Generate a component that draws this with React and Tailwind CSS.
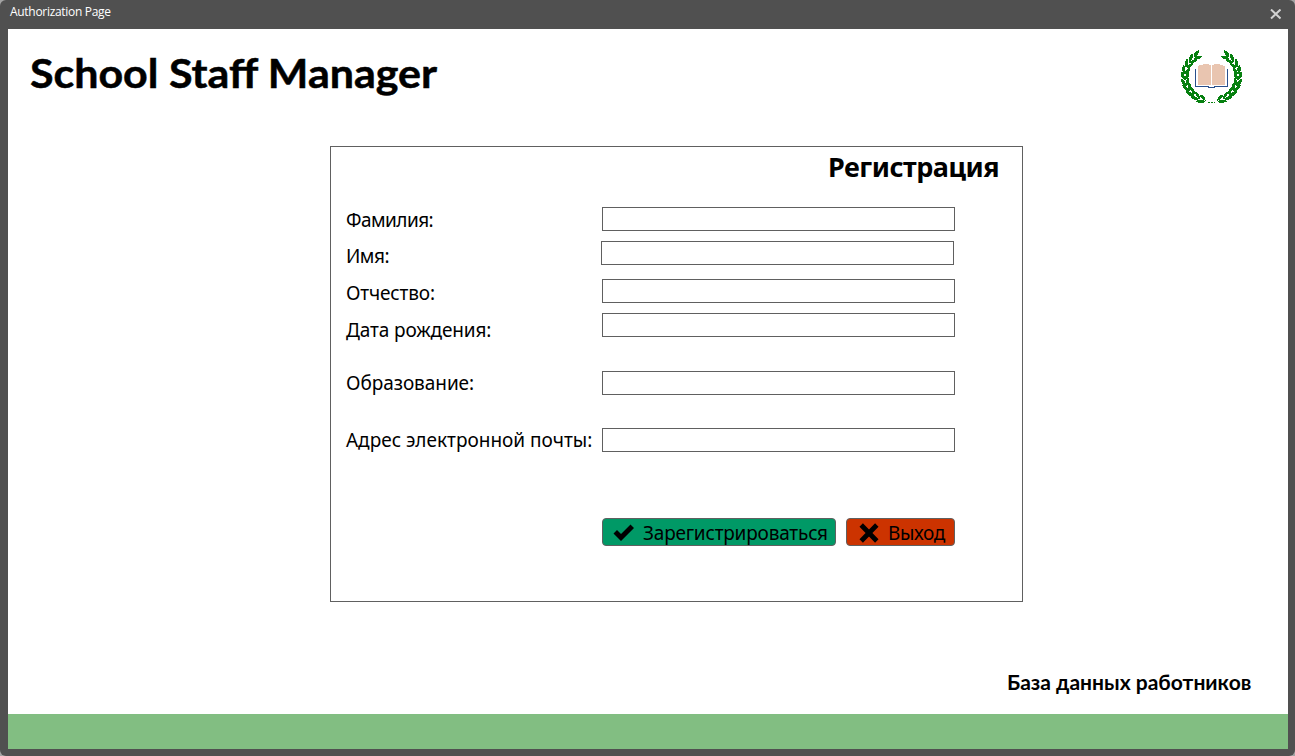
import React from "react";

const FIELDS = [
  { label: "Фамилия:", labelClass: "mt-[61px] tracking-[-0.55px]", inputClass: "mt-[60px]" },
  { label: "Имя:", labelClass: "mt-[12px] tracking-[-0.5px]", inputClass: "mt-[10px] -ml-px" },
  { label: "Отчество:", labelClass: "mt-[13px] tracking-[-0.15px]", inputClass: "mt-[14px]" },
  { label: "Дата рождения:", labelClass: "mt-[13px] tracking-[-0.12px]", inputClass: "mt-[10px]" },
  { label: "Образование:", labelClass: "mt-[29px] tracking-[-0.06px]", inputClass: "mt-[34px]" },
  { label: "Адрес электронной почты:", labelClass: "mt-[33px]", inputClass: "mt-[33px]" },
];

// Branch points of the left half of the wreath, from the tip down to the stem.
const STEPS = [0, 1, 2, 3, 4, 5, 6, 7, 8, 9];

function Branch() {
  return STEPS.map((i) => {
    const deg = 236 - i * 14;
    const a = (deg * Math.PI) / 180;
    const x = 31.5 + 26.5 * Math.cos(a);
    const y = 27.5 + 24.5 * Math.sin(a);
    const dir = deg + 98;
    return (
      <g key={i} transform={`translate(${x} ${y}) rotate(${dir})`}>
        <path d="M-3.500 .2Q-2 -5 4.500 -4.600Q4 -.2 -3.500 .2Z" />
        <path d="M-3.500 .4Q1 -1 5 3Q-1 5.200 -3.500 .4Z" />
      </g>
    );
  });
}

function Logo() {
  return (
    <svg width="64" height="56" viewBox="0 0 64 56" shapeRendering="crispEdges">
      <g fill="#078010">
        <Branch />
        <g transform="matrix(-1 0 0 1 63 0)">
          <Branch />
        </g>
        <path d="M28 53h2v1h-2zM31 53h2v1h-2zM34 53h1v1h-1z" />
      </g>
      <path d="M18 17Q24 14 31 16V36H18ZM32 16Q38 14 45 17V36H32Z" fill="#e9c5b0" />
      <path d="M15.500 20V37.500H27Q31.500 39.500 36 37.500H47.500V20" fill="none" stroke="#294f8c" strokeWidth="1" />
    </svg>
  );
}

export default function App() {
  return (
    <div className="flex h-[756px] w-[1295px] bg-[#a3a3a3] font-['Noto_Sans','Open_Sans',sans-serif] text-black">
      <div className="flex flex-1 flex-col rounded-[6px] bg-[#505050] px-2 pb-[7px] pr-[7px]">
        <header className="flex h-[29px] shrink-0 items-start justify-between">
          <span className="ml-[2px] mt-[4px] whitespace-nowrap font-['Open_Sans',sans-serif] text-[12px] leading-4 tracking-[-0.3px] text-white">
            Authorization Page
          </span>
          <svg className="mr-[7px] mt-[9px]" width="11" height="11" viewBox="0 0 11 11">
            <path d="M1 .5L10.500 9.500M10.500 .5L1 9.500" stroke="#d2d2d2" strokeWidth="2" />
          </svg>
        </header>

        <main className="flex flex-1 flex-col bg-white">
          <div className="flex h-[117px] shrink-0 items-start justify-between">
            <h1 className="ml-[22px] mt-[20px] origin-left scale-x-[1.074] whitespace-nowrap font-['Lato',sans-serif] text-[40px] font-bold leading-[48px] [-webkit-text-stroke:0.5px_black]">
              School Staff Manager
            </h1>
            <div className="mr-[44px] mt-[20px]">
              <Logo />
            </div>
          </div>

          <section className="ml-[322px] flex h-[456px] w-[693px] shrink-0 border border-[#606060] text-[19px]">
            <div className="ml-[15px] flex w-[256px] shrink-0 flex-col">
              {FIELDS.map((f) => (
                <label key={f.label} className={`h-6 whitespace-nowrap leading-6 ${f.labelClass}`}>
                  <span>{f.label}</span>
                </label>
              ))}
            </div>
            <div className="flex flex-1 flex-col">
              <div className="flex h-0 justify-end">
                <h2 className="mr-[23px] mt-[2px] whitespace-nowrap text-[27px] font-bold leading-[36px] tracking-[-0.5px]">
                  Регистрация
                </h2>
              </div>
              {FIELDS.map((f) => (
                <input
                  key={f.label}
                  aria-label={f.label}
                  className={`h-6 w-[353px] shrink-0 border border-[#606060] bg-white px-1 outline-none ${f.inputClass}`}
                />
              ))}
              <div className="mt-[66px] flex gap-[10px]">
                <button className="flex h-7 w-[234px] items-center rounded-[4px] border border-[#606060] bg-[#009966] pl-[10px]">
                  <svg className="mr-[8px] shrink-0" width="22" height="20" viewBox="0 0 22 20">
                    <path d="M.5 11.500L4 8L8 12L17.500 2.500L21 6L8 19Z" fill="black" />
                  </svg>
                  <span className="whitespace-nowrap pt-[2px] leading-6 tracking-[-0.2px]">Зарегистрироваться</span>
                </button>
                <button className="flex h-7 w-[109px] items-center rounded-[4px] border border-[#606060] bg-[#cc3300] pl-[12px]">
                  <svg className="mr-[9px] mt-px shrink-0" width="20" height="20" viewBox="0 0 20 20">
                    <path d="M2.200 2L17.800 18M17.800 2L2.200 18" stroke="black" strokeWidth="4.800" />
                  </svg>
                  <span className="whitespace-nowrap pt-[2px] leading-6 tracking-[-0.35px]">Выход</span>
                </button>
              </div>
            </div>
          </section>

          <div className="flex flex-1 items-start justify-end">
            <p className="mr-[37px] mt-[66px] origin-right scale-x-[1.052] whitespace-nowrap font-['Lato',sans-serif] text-[20px] font-bold leading-7">
              База данных работников
            </p>
          </div>
          <footer className="h-[35px] shrink-0 bg-[#82be82]" />
        </main>
      </div>
    </div>
  );
}
